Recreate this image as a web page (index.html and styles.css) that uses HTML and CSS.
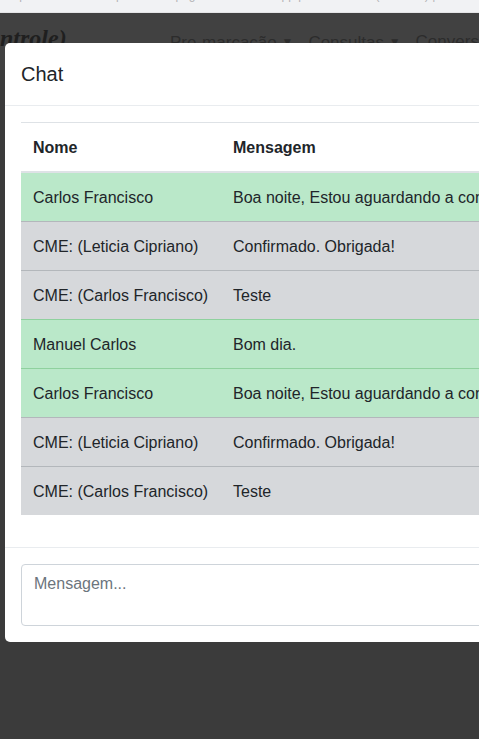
FILE: index.html
```html
<!DOCTYPE html>
<html lang="pt">
<head>
<meta charset="utf-8">
<title>Chat</title>
<link rel="stylesheet" href="styles.css">
</head>
<body>
<div class="topstrip"><span class="toptext">https://sistema.exemplo.com.br/paginas/consultas/app/pre-marcacao (Controle) | sessão ativa</span></div>
<nav class="navbar">
  <span class="brand">ntrole)</span>
  <ul class="navlinks">
    <li>Pre-marcação <span class="caret">▼</span></li>
    <li>Consultas <span class="caret">▼</span></li>
    <li>Conversas</li>
  </ul>
</nav>
<main class="backdrop"></main>

<div class="modal">
  <div class="modal-header">
    <h5 class="modal-title">Chat</h5>
  </div>
  <div class="modal-body">
    <table class="table">
      <thead>
        <tr><th class="col-name">Nome</th><th>Mensagem</th></tr>
      </thead>
      <tbody>
        <tr class="success"><td>Carlos Francisco</td><td>Boa noite, Estou aguardando a confirmação da consulta.</td></tr>
        <tr class="secondary"><td>CME: (Leticia Cipriano)</td><td>Confirmado. Obrigada!</td></tr>
        <tr class="secondary"><td>CME: (Carlos Francisco)</td><td>Teste</td></tr>
        <tr class="success"><td>Manuel Carlos</td><td>Bom dia.</td></tr>
        <tr class="success"><td>Carlos Francisco</td><td>Boa noite, Estou aguardando a confirmação da consulta.</td></tr>
        <tr class="secondary"><td>CME: (Leticia Cipriano)</td><td>Confirmado. Obrigada!</td></tr>
        <tr class="secondary"><td>CME: (Carlos Francisco)</td><td>Teste</td></tr>
      </tbody>
    </table>
  </div>
  <div class="modal-footer">
    <textarea class="form-control" rows="2" placeholder="Mensagem..."></textarea>
  </div>
</div>
</body>
</html>
```

FILE: styles.css
```css
html, body {
  margin: 0;
  padding: 0;
  height: 100%;
  overflow: hidden;
  background: #3b3b3b;
  font-family: "Liberation Sans", Arial, sans-serif;
}

.topstrip {
  height: 12px;
  background: #f1f2f4;
  border-bottom: 1px solid #e4e4e6;
  overflow: hidden;
}

.toptext {
  display: block;
  margin-top: -12px;
  font-size: 12px;
  line-height: 14px;
  color: #b4b4b6;
  white-space: nowrap;
  padding-left: 6px;
}

.navbar {
  height: 57px;
  background: #414141;
  display: flex;
  align-items: flex-start;
  white-space: nowrap;
  overflow: hidden;
}

.brand {
  font-family: "Liberation Serif", "DejaVu Serif", serif;
  font-style: italic;
  font-weight: bold;
  font-size: 24px;
  line-height: 28px;
  color: #1f1f1f;
  margin-left: 0;
  padding-top: 11px;
  width: 170px;
  flex: none;
}

.navlinks {
  list-style: none;
  margin: 0;
  padding: 19px 0 0 0;
  display: flex;
  gap: 15px;
  font-size: 17px;
  line-height: 20px;
  color: #2c2c2c;
}

.caret {
  font-size: 12px;
  vertical-align: 2px;
}

.backdrop {
  display: block;
}

.modal {
  position: absolute;
  top: 43px;
  left: 5px;
  width: 820px;
  background: #fff;
  border-radius: 5px;
  color: #212529;
  font-size: 16px;
  line-height: 24px;
}

.modal-header {
  padding: 16px;
  border-bottom: 1px solid #e9ecef;
}

.modal-title {
  margin: 0;
  font-size: 20px;
  line-height: 30px;
  font-weight: 500;
}

.modal-body {
  padding: 16px;
}

.table {
  width: 100%;
  border-collapse: collapse;
  margin-bottom: 16px;
}

.table th,
.table td {
  padding: 13px 12px 11px;
  text-align: left;
  vertical-align: top;
  border-top: 1px solid #dee2e6;
  white-space: nowrap;
}

.table thead th {
  border-bottom: 2px solid #dee2e6;
  font-weight: bold;
}

.col-name {
  width: 176px;
}

.success td {
  background: #bae8c9;
  border-top-color: #8fd19e;
}

.secondary td {
  background: #d6d8db;
  border-top-color: #b3b7bb;
}

.modal-footer {
  padding: 16px;
  border-top: 1px solid #e9ecef;
}

.form-control {
  display: block;
  box-sizing: border-box;
  width: 100%;
  height: 62px;
  padding: 7px 12px 5px;
  font-family: inherit;
  font-size: 16px;
  line-height: 24px;
  color: #495057;
  border: 1px solid #ced4da;
  border-radius: 4px;
  resize: none;
  margin: 0;
}

.form-control::placeholder {
  color: #6c757d;
}
```
